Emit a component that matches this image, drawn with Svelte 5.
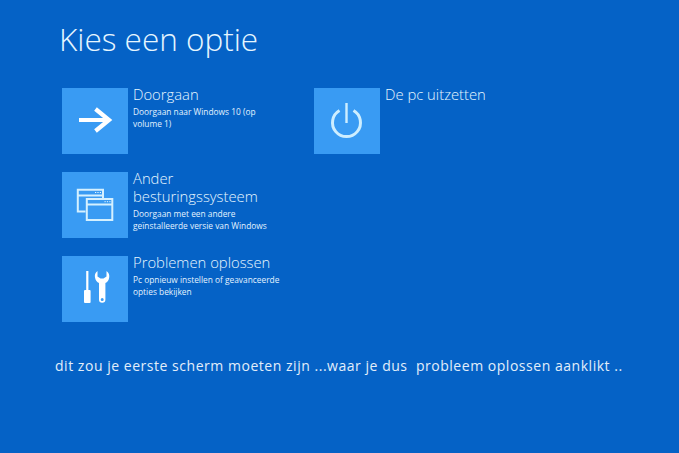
<script lang="ts">
  const leftOptions = [
    { icon: 'arrow', title: 'Doorgaan', text: 'Doorgaan naar Windows 10 (op volume 1)' },
    { icon: 'windows', title: 'Ander besturingssysteem', text: 'Doorgaan met een andere geïnstalleerde versie van Windows' },
    { icon: 'tools', title: 'Problemen oplossen', text: 'Pc opnieuw instellen of geavanceerde opties bekijken' },
  ];
  const rightOptions = [{ icon: 'power', title: 'De pc uitzetten', text: '' }];
</script>

{#snippet option(o)}
  <div class="option">
    <div class="tile">
      <svg width="66" height="66" viewBox="0 0 66 66" fill="none" stroke="#fff">
        {#if o.icon === 'arrow'}
          <path d="M17 32H47M33.500 21L47 32L33.500 43" stroke-width="4.200" />
        {:else if o.icon === 'windows'}
          <g stroke="#d4f0ff" stroke-width="2">
            <path d="M41 26V17.800H15.800V39.500H23.500" />
            <path d="M15.800 23.500H41" />
            <rect x="24.800" y="27" width="25.500" height="21" />
            <path d="M24.800 32.500H50.300" />
          </g>
          <g stroke="#e6f6ff" stroke-width="1" stroke-dasharray="1.200 1.200">
            <path d="M33 20.500H39" />
            <path d="M42.500 29.700H48.500" />
          </g>
        {:else if o.icon === 'tools'}
          <path d="M25.300 15V35" stroke-width="2.200" />
          <rect x="22" y="34" width="6.600" height="13" rx="1" fill="#fff" stroke="none" />
          <path
            fill="#fff"
            stroke="none"
            fill-rule="evenodd"
            d="M35.500 15C33 17 32.500 19 33 21.500C33.500 24.500 35 26 37 27V43.500A3.200 3.200 0 0 0 43.400 43.500V27C45.400 26 46.800 24.500 47.200 21.500C47.600 19 47 17 44.500 15V20.500L41.500 22.500H38.500L35.500 20.500ZM40.200 42A1.500 1.500 0 1 0 40.200 45A1.500 1.500 0 1 0 40.200 42Z"
          />
        {:else}
          <g stroke="#cdeeff">
            <path d="M25.500 22.500A14 14 0 1 0 39.500 22.500" stroke-width="3" />
            <path d="M32.500 15V35" stroke-width="2.400" />
          </g>
        {/if}
      </svg>
    </div>
    <div class="copy">
      <div class="title">{o.title}</div>
      {#if o.text}<div class="text">{o.text}</div>{/if}
    </div>
  </div>
{/snippet}

<main class="screen">
  <h1>Kies een optie</h1>
  <div class="columns">
    <div class="column">
      {#each leftOptions as o}
        {@render option(o)}
      {/each}
    </div>
    <div class="column">
      {#each rightOptions as o}
        {@render option(o)}
      {/each}
    </div>
  </div>
  <p class="note">dit zou je eerste scherm moeten zijn ...waar je dus&nbsp; probleem oplossen aanklikt ..</p>
</main>

<style>
  :global(body) {
    margin: 0;
    background: #0562c6;
  }

  .screen {
    box-sizing: border-box;
    width: 679px;
    height: 453px;
    overflow: hidden;
    padding: 17px 0 0 59px;
    background: #0562c6;
    color: #fff;
    font-family: "Open Sans", sans-serif;
  }

  h1 {
    margin: 0 0 27px;
    font-size: 31.500px;
    line-height: 44px;
    font-weight: 300;
    color: #e6f6ff;
  }

  .columns {
    display: flex;
    padding-left: 3px;
  }

  .column {
    display: flex;
    flex-direction: column;
    gap: 18px;
    width: 252px;
  }

  .option {
    display: flex;
    gap: 5px;
    height: 66px;
  }

  .tile {
    flex: none;
    width: 66px;
    height: 66px;
    background: #399bf3;
  }

  .tile svg {
    display: block;
  }

  .copy {
    width: 150px;
    margin-top: -3px;
  }

  .title {
    font-size: 14.800px;
    line-height: 18px;
    font-weight: 300;
    color: #e6f6ff;
  }

  .text {
    margin-top: 3px;
    font-size: 8.350px;
    line-height: 12px;
    color: #e2f2ff;
  }

  .note {
    margin: 34px 0 0 -4px;
    font-size: 14px;
    line-height: 20px;
    letter-spacing: 0.530px;
    white-space: nowrap;
    color: #e2eefa;
  }
</style>
